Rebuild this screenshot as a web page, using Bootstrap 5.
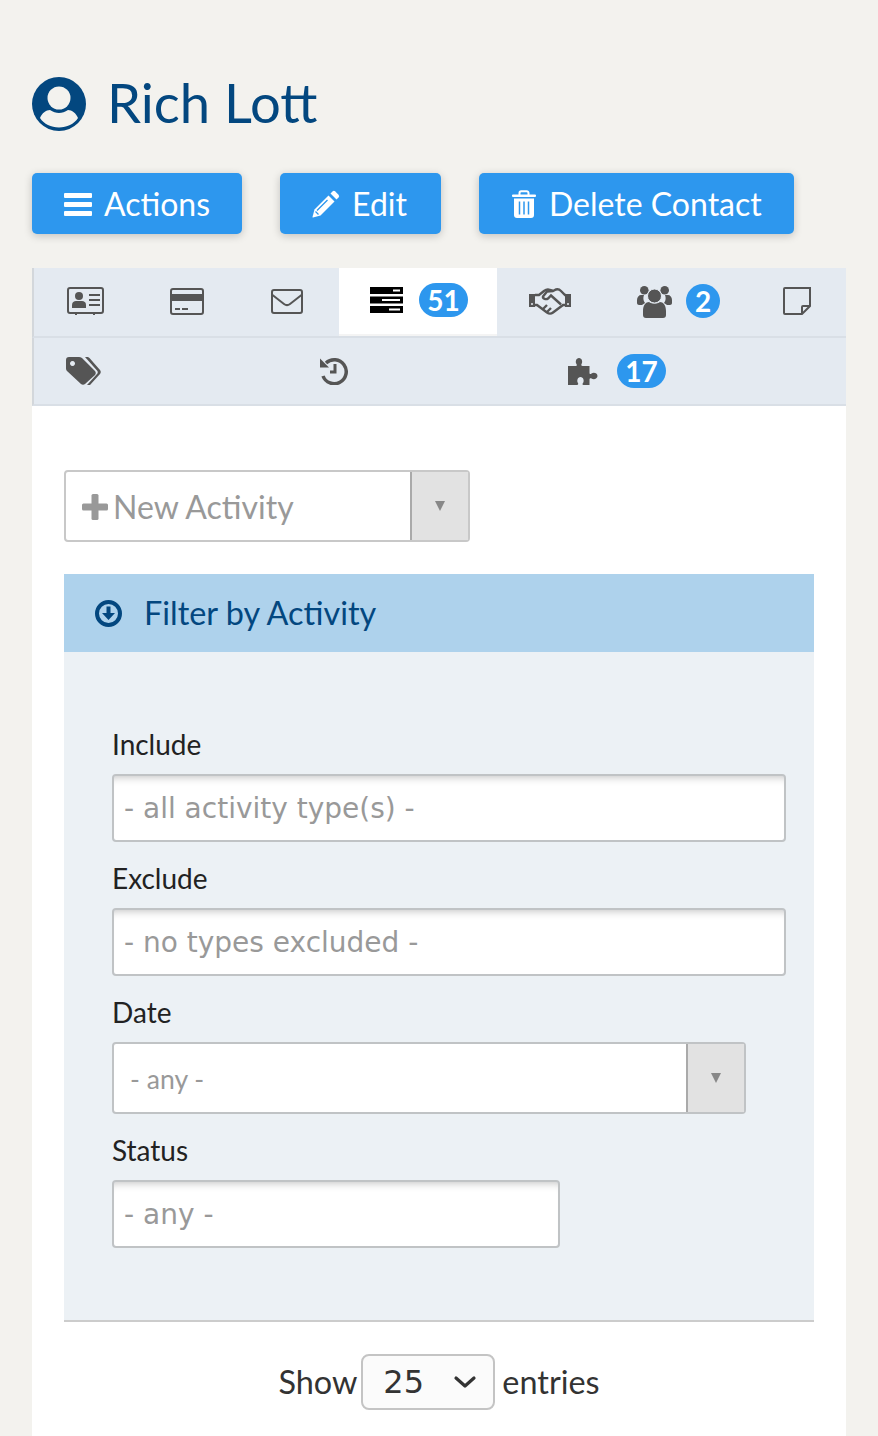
<!DOCTYPE html>
<html lang="en">
<head>
  <meta charset="UTF-8">
  <title>Rich Lott</title>
  <link href="https://cdn.jsdelivr.net/npm/bootstrap@5.3.0/dist/css/bootstrap.min.css" rel="stylesheet">
  <style>
    body {
      background-color: #f3f2ee;
      font-family: "Lato", sans-serif;
      color: #222;
      padding: 0 32px;
    }
    .contact-title {
      display: flex;
      align-items: center;
      gap: 21px;
      color: #03477f;
      font-size: 54.4px;
      font-weight: 400;
      line-height: 66px;
      margin: 0;
      padding-top: 71px;
    }
    .contact-title span {
      margin: -2px 0 2px;
    }
    .action-bar {
      display: flex;
      gap: 38px;
      margin-top: 36px;
    }
    .btn-crm {
      display: inline-flex;
      align-items: center;
      gap: 12px;
      height: 61px;
      padding: 0 32px;
      font-size: 32px;
      color: #fff;
      background-color: #2d97ee;
      border: 0;
      border-radius: 5px;
      box-shadow: 0 2px 8px rgba(0, 0, 0, .2);
    }
    .btn-edit {
      padding-right: 34px;
    }
    .btn-del {
      gap: 13px;
      padding-left: 33px;
    }
    .contact-panel {
      margin-top: 34px;
      width: 814px;
      background: #fff;
    }
    .tab-row {
      display: flex;
      background: #e4eaf1;
      border-left: 2px solid #d3d7db;
      border-bottom: 2px solid #d9dfe6;
      height: 70px;
    }
    .tab-row.second {
      height: 68px;
    }
    .tab-cell {
      display: flex;
      align-items: center;
      justify-content: center;
      gap: 16px;
      height: 68px;
      padding-bottom: 2px;
      color: #555;
    }
    .tab-row.second .tab-cell {
      height: 66px;
      padding-bottom: 0;
    }
    .tab-cell.active {
      background: #fff;
      padding-left: 2px;
      border-bottom: 2px solid #f4f4f4;
    }
    .w-102 { width: 102px; }
    .w-101 { width: 101px; padding-right: 3px; }
    .w-158 { width: 158px; }
    .w-106 { width: 106px; }
    .w-151 { width: 151px; gap: 14px !important; }
    .w-92 { width: 92px; padding-right: 6px; }
    .w-99 { width: 99px; }
    .w-402 { width: 402px; }
    .w-164 { width: 164px; gap: 19px !important; }
    .count-pill {
      min-width: 34px;
      height: 34px;
      padding: 0 8px;
      border-radius: 17px;
      background: #2d97ee;
      color: #fff;
      font-size: 28px;
      font-weight: 700;
      line-height: 34px;
      text-align: center;
    }
    .panel-body {
      padding: 64px 32px 0;
    }
    .split-select {
      display: flex;
      width: 406px;
      height: 72px;
      border: 2px solid #c8c8c8;
      border-radius: 4px;
      background: #fff;
    }
    .split-label {
      flex: 1;
      display: flex;
      align-items: center;
      gap: 5px;
      padding: 2px 0 0 16px;
      font-size: 32px;
      color: #999;
    }
    .split-arrow {
      width: 58px;
      display: flex;
      align-items: center;
      justify-content: center;
      background: #e2e2e2;
      border-left: 2px solid #aaa;
    }
    .split-arrow::after {
      content: "";
      border-left: 5.5px solid transparent;
      border-right: 5.5px solid transparent;
      border-top: 10px solid #888;
    }
    .filter-head {
      display: flex;
      align-items: center;
      gap: 22px;
      height: 78px;
      margin-top: 32px;
      padding-left: 31px;
      background: #aed2ec;
      color: #03477f;
      font-size: 32.4px;
    }
    .filter-body {
      height: 670px;
      padding: 75px 28px 0 48px;
      background: #ecf1f5;
      border-bottom: 2px solid #ccc;
    }
    .filter-label {
      display: block;
      margin: 0 0 13px;
      font-size: 28px;
      line-height: 34px;
    }
    .filter-input {
      height: 68px;
      padding: 0 10px;
      margin-bottom: 19px;
      font-family: "DejaVu Sans", sans-serif;
      font-size: 28px;
      border: 2px solid #c0c3c5;
      border-radius: 4px;
      box-shadow: inset 0 9px 8px -8px rgba(0, 0, 0, .25);
    }
    .filter-input::placeholder {
      color: #999;
    }
    .status-input {
      width: 448px;
    }
    .date-select {
      width: 634px;
      height: 72px;
      margin-bottom: 19px;
      border-color: #c0c3c5;
    }
    .date-select .split-label {
      font-size: 26.6px;
      padding: 4px 0 0 16px;
    }
    .date-select .split-arrow {
      border-left-color: #aaa;
    }
    .length-row {
      display: flex;
      align-items: center;
      justify-content: center;
      padding: 32px 0 26px;
      font-size: 32.4px;
      color: #333;
    }
    .length-row span {
      padding-top: 1px;
    }
    .length-select {
      width: 134px;
      height: 56px;
      margin: 0 7px 0 4px;
      padding: 0 14px 0 20px;
      font-family: "DejaVu Sans", sans-serif;
      font-size: 32px;
      color: #333;
      background-color: #fbfbfb;
      background-image: url("data:image/svg+xml,%3csvg xmlns='http://www.w3.org/2000/svg' viewBox='0 0 24 16'%3e%3cpath fill='none' stroke='%23333' stroke-linecap='round' stroke-linejoin='round' stroke-width='3.2' d='M3 4l9 8 9-8'/%3e%3c/svg%3e");
      background-position: right 16px center;
      background-size: 24px 16px;
      border: 2px solid #c4c4c4;
      border-radius: 8px;
    }
  </style>
</head>
<body>

<h1 class="contact-title">
  <svg width="54" height="54" viewBox="0 0 54 54">
    <circle cx="27" cy="27" r="27" fill="#03477f"/>
    <circle cx="27" cy="21" r="11.5" fill="#f3f2ee"/>
    <path d="M8 41c2-5 6-8 10-8 3 2 6 3 9 3s6-1 9-3c4 0 8 3 10 8-4 6-11 9.500-19 9.500S12 47 8 41z" fill="#f3f2ee"/>
  </svg>
  <span>Rich Lott</span>
</h1>

<div class="action-bar">
  <button class="btn-crm">
    <svg width="28" height="24" viewBox="0 0 28 24" fill="#fff"><rect y="1" width="28" height="5" rx="1"/><rect y="10" width="28" height="5" rx="1"/><rect y="19" width="28" height="5" rx="1"/></svg>
    Actions
  </button>
  <button class="btn-crm btn-edit">
    <svg width="28" height="28" viewBox="0 0 28 28" fill="#fff"><path d="M18.500 3.500 20.500 1.500a2 2 0 0 1 2.800 0l3.200 3.200a2 2 0 0 1 0 2.800L24.500 9.500z"/><path d="M16.500 5.500 22.500 11.500 8.500 25.500 1 27.500a.5.5 0 0 1-.5-.5L2.500 19.500z"/><path d="M3.500 21.500 6.500 24.500M5 20.500 15.500 10" stroke="#2d97ee" stroke-width="1.300" fill="none"/></svg>
    Edit
  </button>
  <button class="btn-crm btn-del">
    <svg width="24" height="28" viewBox="0 0 24 28"><path d="M7.500 5V3a1.800 1.800 0 0 1 1.800-1.800h5.400A1.800 1.800 0 0 1 16.500 3v2" fill="none" stroke="#fff" stroke-width="2"/><rect y="4.500" width="24" height="2.500" rx="1" fill="#fff"/><path d="M2 8.500h20V25a3 3 0 0 1-3 3H5a3 3 0 0 1-3-3z" fill="#fff"/><path d="M7.500 11.500v13M12 11.500v13M16.500 11.500v13" stroke="#2d97ee" stroke-width="1.500"/></svg>
    Delete Contact
  </button>
</div>

<div class="contact-panel">
  <div class="tab-row">
    <div class="tab-cell w-102">
      <svg width="37" height="28" viewBox="0 0 37 28" fill="#555"><rect x="1" y="1" width="35" height="25" rx="2" fill="none" stroke="#555" stroke-width="2"/><circle cx="12" cy="9" r="4"/><path d="M5 21v-3c0-3 2-4 4-4h6c2 0 4 1 4 4v3z"/><path d="M22 8h11M22 13h11M22 18h11" stroke="#555" stroke-width="2"/><path d="M9 26v2M27 26v2" stroke="#555" stroke-width="2"/></svg>
    </div>
    <div class="tab-cell w-102">
      <svg width="34" height="27" viewBox="0 0 34 27" fill="#555"><rect x="1" y="1" width="32" height="25" rx="2" fill="none" stroke="#555" stroke-width="2"/><rect x="1" y="6" width="32" height="7"/><path d="M5 21h5M12 21h6" stroke="#555" stroke-width="2"/></svg>
    </div>
    <div class="tab-cell w-101">
      <svg width="32" height="25" viewBox="0 0 32 25"><rect x="1" y="1" width="30" height="23" rx="2" fill="none" stroke="#555" stroke-width="2"/><path d="M1.500 6 13 15c2 1.500 4 1.500 6 0L30.500 6" fill="none" stroke="#555" stroke-width="2"/></svg>
    </div>
    <div class="tab-cell active w-158">
      <svg width="33" height="26" viewBox="0 0 33 26"><rect y="0" width="33" height="7" fill="#000"/><rect y="9.500" width="33" height="7" fill="#000"/><rect y="19" width="33" height="7" fill="#000"/><path d="M23 3.500h7M12 13h18M19 22.500h11" stroke="#fff" stroke-width="2"/></svg>
      <span class="count-pill">51</span>
    </div>
    <div class="tab-cell w-106">
      <svg width="42" height="27" viewBox="0 0 42 27" fill="none" stroke="#555" stroke-width="2.400"><path d="M0 6h6v13H0zM36 6h6v13h-6z" fill="#555" stroke="none"/><circle cx="3" cy="16" r="1" fill="#e4eaf1" stroke="none"/><circle cx="39" cy="16" r="1" fill="#e4eaf1" stroke="none"/><path d="M6 7h4l5-4c2-1.500 4-2 6-1l3 1 3-1.500c2-.5 4 .5 5 1.500l4 4h1"/><path d="M6 17h2l10 7.500c2 1.500 4 1.500 6 0l10-7.500h2"/><path d="M24 3l-6 .5-4 5c-.5 2 3 3.500 5 2l3-3 10 9"/><path d="M14 21l4-4M18 24l4-4"/></svg>
    </div>
    <div class="tab-cell w-151">
      <svg width="35" height="33" viewBox="0 0 35 33" fill="#555"><circle cx="7.300" cy="5.300" r="4.300"/><circle cx="27.700" cy="5.300" r="4.300"/><path d="M0 15c0-3 2-5 4-5h3c-1 3-1 5 1 8l-3 2H2c-1 0-2-1-2-2zM35 15c0-3-2-5-4-5h-3c1 3 1 5-1 8l3 2h3c1 0 2-1 2-2z"/><path d="M6 26c0-6 3-9 6-9 3 2 8 2 11 0 3 0 6 3 6 9v4c0 2-1 3-3 3H9c-2 0-3-1-3-3z"/><circle cx="17.500" cy="11" r="7" stroke="#e4eaf1" stroke-width="1"/></svg>
      <span class="count-pill">2</span>
    </div>
    <div class="tab-cell w-92">
      <svg width="28" height="28" viewBox="0 0 28 28" fill="none" stroke="#555" stroke-width="2"><path d="M27 1H2a1 1 0 0 0-1 1v24a1 1 0 0 0 1 1h17l8-8z"/><path d="M19 27v-7c0-.5.500-1 1-1h7"/></svg>
    </div>
  </div>
  <div class="tab-row second">
    <div class="tab-cell w-99">
      <svg width="35" height="28" viewBox="0 0 35 28" fill="#555"><path d="M0 3a3 3 0 0 1 3-3h10c1 0 2 .5 3 1l13 13c1 1 1 3 0 4L19 27c-1 1-3 1-4 0L1 14c-.6-.6-1-1.500-1-2.500zM6.500 4a2.500 2.500 0 1 0 .01 0z" fill-rule="evenodd"/><path d="M19 0h2c1 0 2 .5 2.500 1L34 13c1 1 1 3 0 4L24 28h-3l10-11c1-1 1-2.500 0-3.500z"/></svg>
    </div>
    <div class="tab-cell w-402">
      <svg width="28" height="28" viewBox="0 0 28 28" fill="none" stroke="#555" stroke-width="3.500"><path d="M6 6a12 12 0 1 1-3 13"/><path d="M0 1.500v9h9z" fill="#555" stroke="none"/><path d="M15 7v8l-5 0" stroke-width="3"/></svg>
    </div>
    <div class="tab-cell w-164">
      <svg width="30" height="28" viewBox="0 0 30 28" fill="#555"><path d="M0 9h8c1 0 1-1 .500-2C7 5 8 1 11 1s4 4 2.500 6c-.5 1 0 2 1 2h7v7c0 1 1 1.500 2 .500 2-1.500 6-.5 6 2.500s-4 4-6 2.500c-1-.5-2 0-2 1V28h-6c-1 0-1.500-1-.5-2 1.500-2 .5-6-2.500-6s-4 4-2.500 6c.5 1 0 2-1 2H0z"/></svg>
      <span class="count-pill">17</span>
    </div>
  </div>

  <div class="panel-body">
    <div class="split-select">
      <div class="split-label">
        <svg width="26" height="26" viewBox="0 0 26 26" fill="#999"><rect x="9.500" width="7" height="26" rx="1.500"/><rect y="9.500" width="26" height="7" rx="1.500"/></svg>
        New Activity
      </div>
      <div class="split-arrow"></div>
    </div>

    <div class="filter-head">
      <svg width="27" height="27" viewBox="0 0 27 27"><circle cx="13.500" cy="13.500" r="11.500" fill="none" stroke="#03477f" stroke-width="4"/><path d="M11.500 6.500h4V13h4.500l-6.500 7-6.500-7h4.500z" fill="#03477f"/></svg>
      Filter by Activity
    </div>

    <div class="filter-body">
      <label class="filter-label">Include</label>
      <input class="form-control filter-input" placeholder="- all activity type(s) -">
      <label class="filter-label">Exclude</label>
      <input class="form-control filter-input" placeholder="- no types excluded -">
      <label class="filter-label">Date</label>
      <div class="split-select date-select">
        <div class="split-label">- any -</div>
        <div class="split-arrow"></div>
      </div>
      <label class="filter-label">Status</label>
      <input class="form-control filter-input status-input" placeholder="- any -">
    </div>

    <div class="length-row">
      <span>Show</span>
      <select class="form-select length-select">
        <option>25</option>
      </select>
      <span>entries</span>
    </div>
  </div>
</div>

<script src="https://cdn.jsdelivr.net/npm/bootstrap@5.3.0/dist/js/bootstrap.bundle.min.js"></script>
</body>
</html>
